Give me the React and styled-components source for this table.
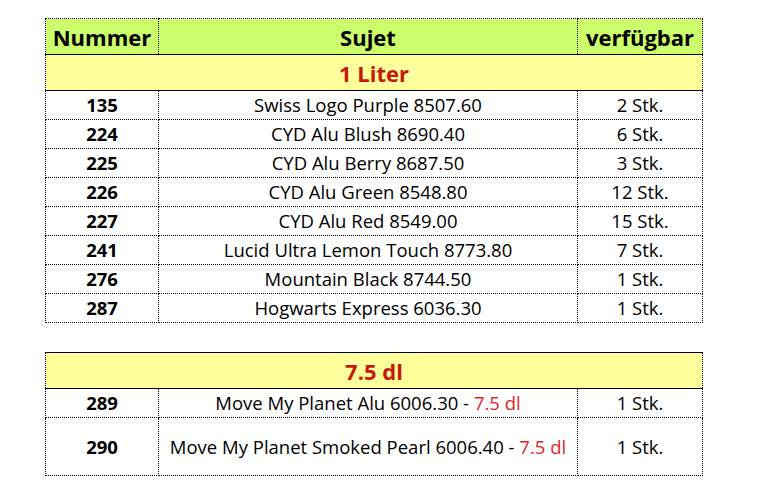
import React from "react";
import styled, { createGlobalStyle } from "styled-components";

const GlobalStyle = createGlobalStyle`
  html, body {
    margin: 0;
    padding: 0;
    background: #ffffff;
  }
  body {
    font-family: "Open Sans", Lato, sans-serif;
  }
`;

const liter = [
  { nr: "135", name: "Swiss Logo Purple 8507.60", qty: "2 Stk." },
  { nr: "224", name: "CYD Alu Blush 8690.40", qty: "6 Stk." },
  { nr: "225", name: "CYD Alu Berry 8687.50", qty: "3 Stk." },
  { nr: "226", name: "CYD Alu Green 8548.80", qty: "12 Stk." },
  { nr: "227", name: "CYD Alu Red 8549.00", qty: "15 Stk." },
  { nr: "241", name: "Lucid Ultra Lemon Touch 8773.80", qty: "7 Stk." },
  { nr: "276", name: "Mountain Black 8744.50", qty: "1 Stk." },
  { nr: "287", name: "Hogwarts Express 6036.30", qty: "1 Stk." },
];

const deciliter = [
  { nr: "289", name: "Move My Planet Alu 6006.30", qty: "1 Stk.", tall: false },
  { nr: "290", name: "Move My Planet Smoked Pearl 6006.40", qty: "1 Stk.", tall: true },
];

function Columns() {
  return (
    <colgroup>
      <col style={{ width: 113 }} />
      <col style={{ width: 419 }} />
      <col style={{ width: 125 }} />
    </colgroup>
  );
}

function App() {
  return (
    <Page>
      <GlobalStyle />
      <Sheet>
        <Columns />
        <tbody>
          <HeadRow>
            <HeadCell>Nummer</HeadCell>
            <HeadCell>Sujet</HeadCell>
            <HeadCell>verfügbar</HeadCell>
          </HeadRow>
          <GroupRow>
            <GroupCell colSpan={3}>1 Liter</GroupCell>
          </GroupRow>
          {liter.map((r) => (
            <DataRow key={r.nr}>
              <NumCell>{r.nr}</NumCell>
              <Cell>{r.name}</Cell>
              <Cell>{r.qty}</Cell>
            </DataRow>
          ))}
        </tbody>
      </Sheet>

      <Sheet $gap>
        <Columns />
        <tbody>
          <GroupRow>
            <GroupCell colSpan={3}>7.5 dl</GroupCell>
          </GroupRow>
          {deciliter.map((r) => (
            <DataRow key={r.nr} $tall={r.tall}>
              <NumCell>{r.nr}</NumCell>
              <Cell>
                {r.name} - <Volume>7.5 dl</Volume>
              </Cell>
              <Cell>{r.qty}</Cell>
            </DataRow>
          ))}
        </tbody>
      </Sheet>
    </Page>
  );
}

const Page = styled.div`
  display: flex;
  flex-direction: column;
  padding: 18px 0 0 45px;
`;

const Sheet = styled.table`
  border-collapse: collapse;
  table-layout: fixed;
  width: 657px;
  margin-top: ${(p) => (p.$gap ? "29px" : "0")};
  color: #000;
`;

const HeadRow = styled.tr`
  height: 36px;
  background: #ccfd6a;
`;

const HeadCell = styled.td`
  border: 1px dotted #000;
  border-bottom: 1px solid #000;
  padding: 0;
  text-align: center;
  vertical-align: middle;
  font-size: 22px;
  line-height: 1;
  font-weight: 700;
`;

const GroupRow = styled.tr`
  height: 36px;
  background: #ffff9c;
`;

const GroupCell = styled.td`
  border: 1px dotted #000;
  border-top: 1px solid #000;
  border-bottom: 1px solid #000;
  padding: 0;
  text-align: center;
  vertical-align: middle;
  font-size: 22px;
  line-height: 1;
  font-weight: 700;
  color: #c8170c;
`;

const DataRow = styled.tr`
  height: ${(p) => (p.$tall ? "58px" : "29px")};
`;

const Cell = styled.td`
  border: 1px dotted #000;
  padding: 1px 0 0;
  text-align: center;
  vertical-align: middle;
  font-size: 18.5px;
  line-height: 1;
  white-space: nowrap;
`;

const NumCell = styled(Cell)`
  font-weight: 700;
`;

const Volume = styled.span`
  color: #e0262a;
`;

export default App;
